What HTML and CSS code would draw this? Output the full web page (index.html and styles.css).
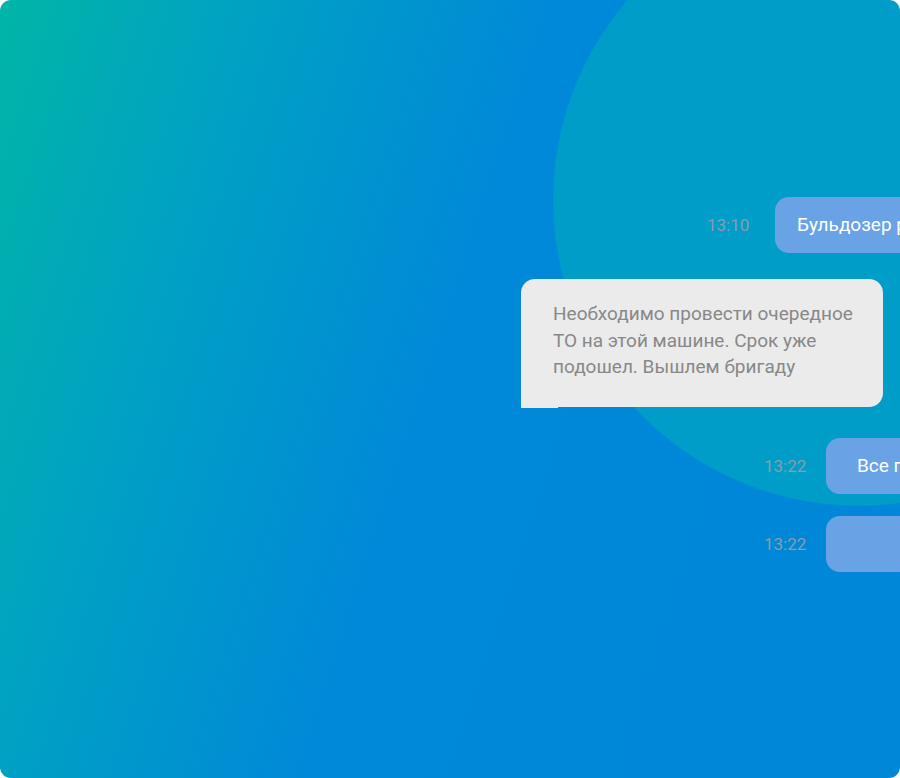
FILE: index.html
```html
<!DOCTYPE html>
<html lang="ru">
<head>
<meta charset="utf-8">
<link rel="stylesheet" href="styles.css">
</head>
<body>
<div class="screen">
  <div class="chat">
    <div class="row row-out row-first">
      <span class="time">13:10</span>
      <div class="bubble bubble-out">Бульдозер работает</div>
    </div>
    <div class="row row-in">
      <div class="bubble bubble-in">Необходимо провести очередное ТО на этой машине. Срок уже подошел. Вышлем бригаду</div>
    </div>
    <div class="row row-out row-second">
      <span class="time">13:22</span>
      <div class="bubble bubble-out">Все понятно</div>
    </div>
    <div class="row row-out row-third">
      <span class="time">13:22</span>
      <div class="bubble bubble-out bubble-empty"></div>
    </div>
  </div>
</div>
</body>
</html>
```

FILE: styles.css
```css
* { box-sizing: border-box; }
html, body { margin: 0; padding: 0; background: #ffffff; }
body { font-family: Roboto, "Noto Sans", sans-serif; }

.screen {
  width: 900px;
  height: 778px;
  border-radius: 11px;
  overflow: hidden;
  background:
    radial-gradient(circle 306px at 859px 200px, #009dc9 305px, rgba(0,157,201,0) 306.5px),
    linear-gradient(108deg, #00b5a7 0%, #00a1c4 22%, #0089d8 48%, #0087d8 100%);
}

.chat {
  padding-top: 197px;
  padding-left: 521px;
  display: flex;
  flex-direction: column;
  width: 1300px;
}

.row {
  display: flex;
  align-items: center;
}

.row-first { margin-left: 186px; gap: 25px; }
.row-in { margin-top: 26px; }
.row-second { margin-top: 31px; margin-left: 243px; gap: 19px; }
.row-third { margin-top: 22px; margin-left: 243px; gap: 19px; }

.time {
  font-size: 17px;
  color: #8c9ca9;
  width: 43px;
  white-space: nowrap;
}

.bubble {
  font-size: 19px;
  line-height: 24px;
  border-radius: 14px;
}

.bubble-out {
  background: #6aa3e5;
  color: #ffffff;
  height: 56px;
  padding: 16px 22px;
  white-space: nowrap;
}

.row-second .bubble-out { padding-left: 31px; }

.bubble-empty { width: 200px; }

.bubble-in {
  position: relative;
  width: 362px;
  background: #ebebeb;
  color: #888888;
  line-height: 26.5px;
  padding: 22px 18px 26px 32px;
  border-bottom-left-radius: 0;
}

.bubble-in::after {
  content: "";
  position: absolute;
  left: 0;
  bottom: -1px;
  width: 37px;
  height: 1px;
  background: #ebebeb;
}
```
